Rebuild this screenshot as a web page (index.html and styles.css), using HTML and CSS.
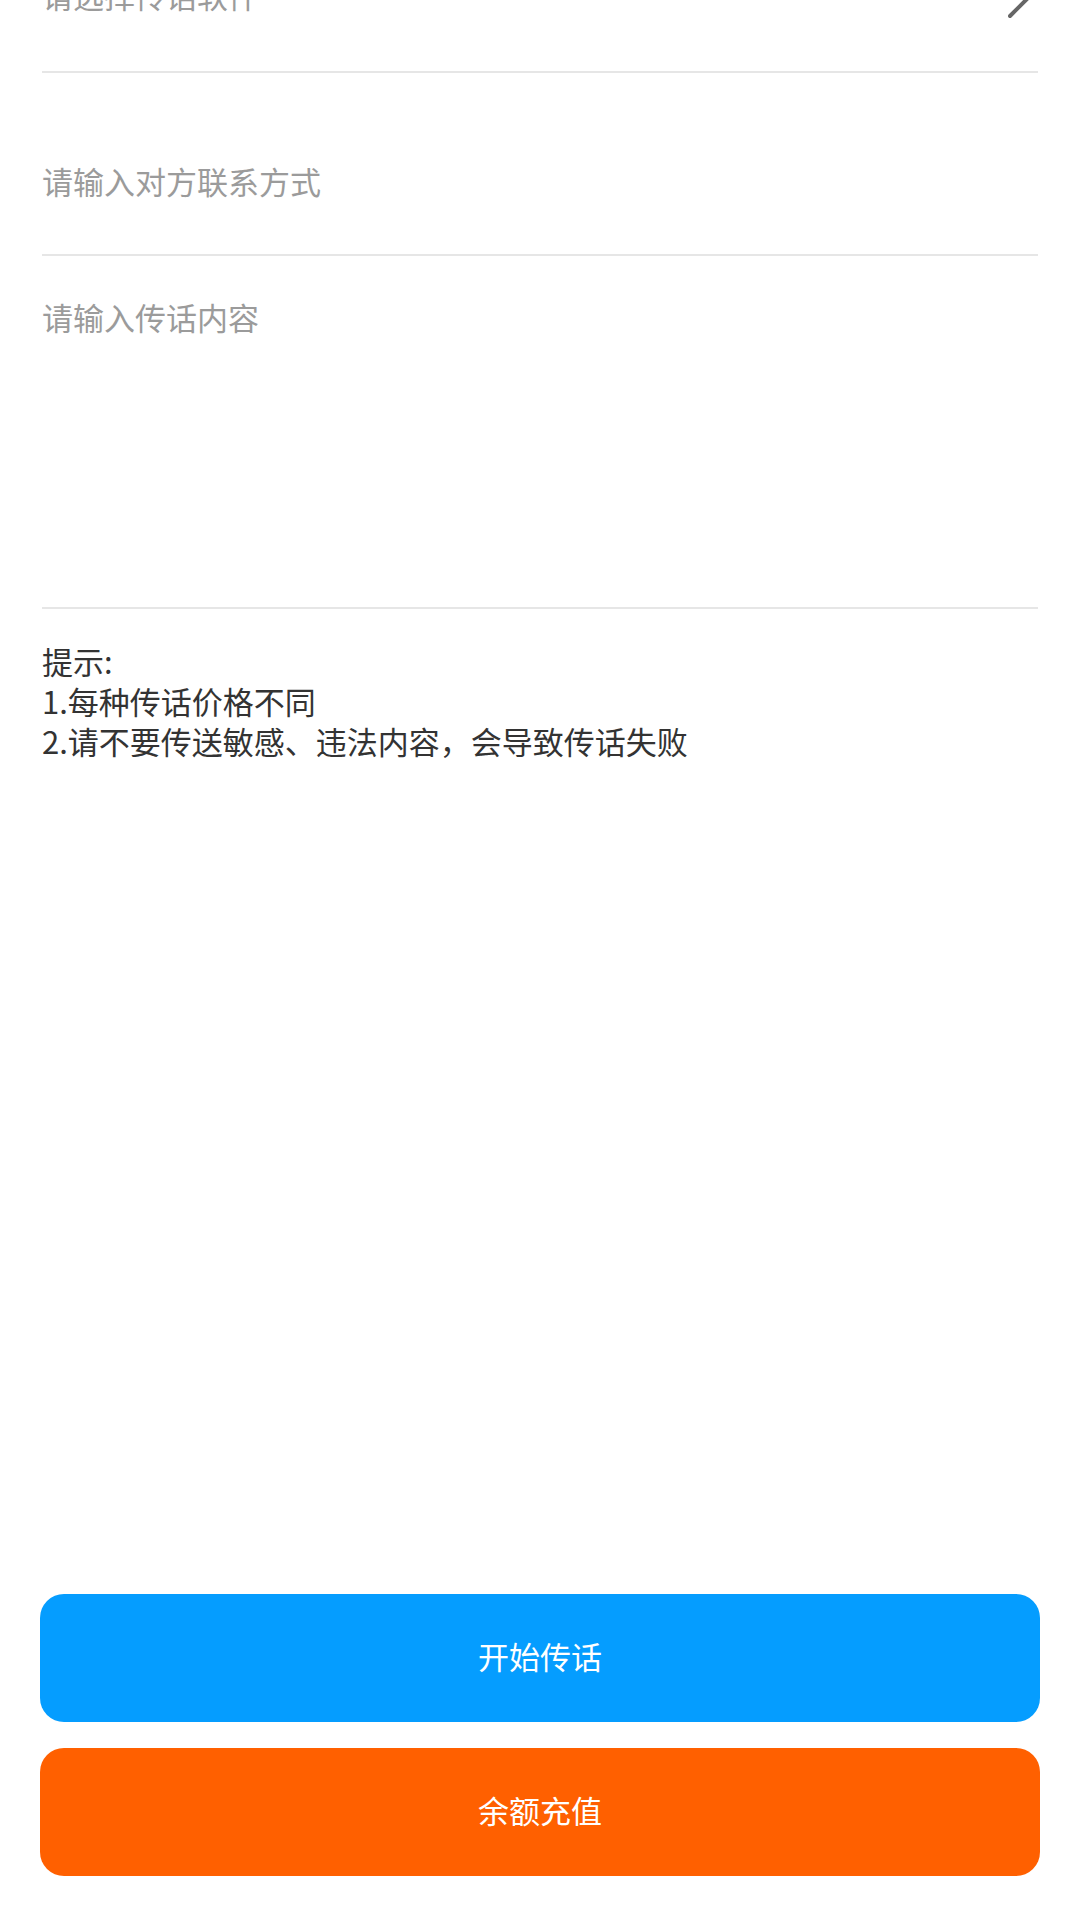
FILE: index.html
```html
<!DOCTYPE html>
<html lang="zh-CN">
<head>
<meta charset="utf-8">
<title>传话</title>
<link rel="stylesheet" href="styles.css">
</head>
<body>
<div class="page">
  <div class="form">
    <div class="row row-select">
      <span class="placeholder">请选择传话软件</span>
      <svg class="chevron" width="24" height="44" viewBox="0 0 24 44" aria-hidden="true">
        <polyline points="2,3 21,22 2,41" fill="none" stroke="#666" stroke-width="4" stroke-linecap="round" stroke-linejoin="round"/>
      </svg>
    </div>
    <div class="row row-contact">
      <span class="placeholder">请输入对方联系方式</span>
    </div>
    <div class="row row-content">
      <span class="placeholder">请输入传话内容</span>
    </div>
    <div class="hints">
      <p>提示:</p>
      <p>1.每种传话价格不同</p>
      <p>2.请不要传送敏感、违法内容，会导致传话失败</p>
    </div>
  </div>
  <div class="actions">
    <button class="btn btn-start">开始传话</button>
    <button class="btn btn-recharge">余额充值</button>
  </div>
</div>
</body>
</html>
```
FILE: styles.css
```css
html, body {
  margin: 0;
  padding: 0;
  background: #ffffff;
}
body {
  font-family: "Noto Sans CJK SC", "Noto Sans", sans-serif;
  font-size: 31px;
  line-height: 40px;
  overflow: hidden;
}
.page {
  margin-top: -93px;
  height: calc(100vh + 93px);
  display: flex;
  flex-direction: column;
  box-sizing: border-box;
  padding-bottom: 44px;
}
.form {
  padding: 0 42px;
}
.row {
  display: flex;
  align-items: center;
  justify-content: space-between;
  border-bottom: 2px solid #e6e6e6;
}
.placeholder {
  color: #9b9b9b;
}
.row-select {
  padding-top: 68px;
  padding-bottom: 56px;
  height: 40px;
}
.chevron {
  display: block;
  margin-right: 6px;
  margin-top: 4px;
}
.row-contact {
  padding-top: 88px;
  padding-bottom: 53px;
  height: 40px;
}
.row-content {
  align-items: flex-start;
  padding-top: 41px;
  height: 310px;
  box-sizing: content-box;
}
.hints {
  margin-top: 32px;
  color: #333333;
}
.hints p {
  margin: 0;
  line-height: 40px;
}
.actions {
  margin-top: auto;
  padding: 0 40px;
  display: flex;
  flex-direction: column;
  gap: 26px;
}
.btn {
  height: 128px;
  border: none;
  border-radius: 24px;
  color: #ffffff;
  font-family: "Noto Sans CJK SC", "Noto Sans", sans-serif;
  font-size: 31px;
  padding: 0 0 5px 0;
}
.btn-start {
  background: #059dff;
}
.btn-recharge {
  background: #ff6000;
}
```
